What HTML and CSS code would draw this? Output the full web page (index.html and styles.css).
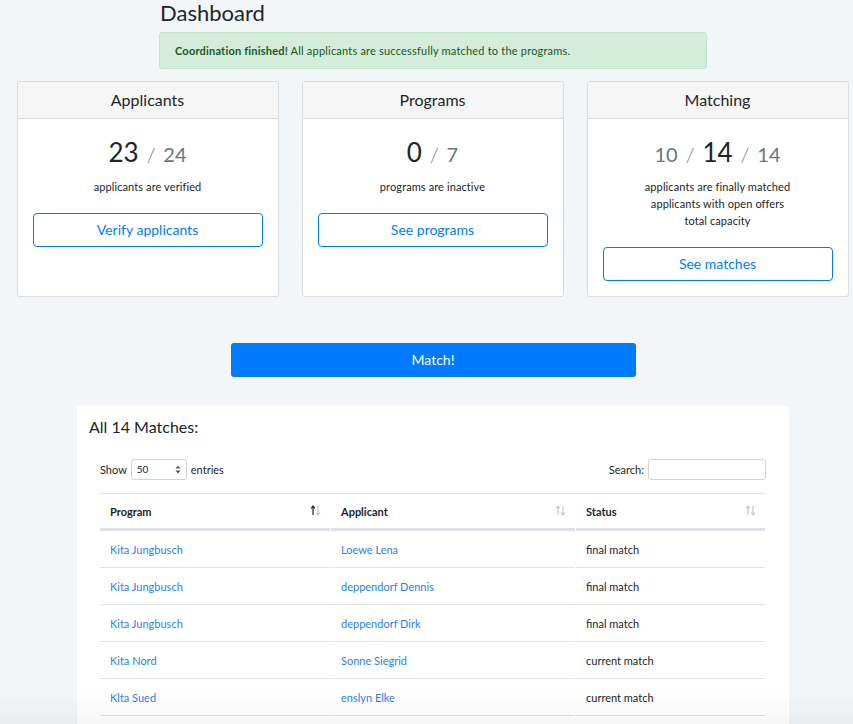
FILE: index.html
```html
<!DOCTYPE html>
<html>
<head>
<meta charset="utf-8">
<link rel="stylesheet" href="styles.css">
</head>
<body>
<div class="page">
  <div class="top">
    <h1 class="title">Dashboard</h1>
    <div class="alert"><strong>Coordination finished!</strong> All applicants are successfully matched to the programs.</div>
  </div>

  <div class="cards">
    <div class="card">
      <div class="card-head">Applicants</div>
      <div class="card-body">
        <div class="nums"><span class="big">23</span><span class="sep">/</span><span class="small">24</span></div>
        <div class="desc">applicants are verified</div>
        <a class="btn-outline">Verify applicants</a>
      </div>
    </div>
    <div class="card">
      <div class="card-head">Programs</div>
      <div class="card-body">
        <div class="nums"><span class="big">0</span><span class="sep">/</span><span class="small">7</span></div>
        <div class="desc">programs are inactive</div>
        <a class="btn-outline">See programs</a>
      </div>
    </div>
    <div class="card">
      <div class="card-head">Matching</div>
      <div class="card-body">
        <div class="nums"><span class="small">10</span><span class="sep">/</span><span class="big">14</span><span class="sep">/</span><span class="small">14</span></div>
        <div class="desc">applicants are finally matched<br>applicants with open offers<br>total capacity</div>
        <a class="btn-outline">See matches</a>
      </div>
    </div>
  </div>

  <a class="btn-match">Match!</a>

  <div class="matches">
    <h2 class="matches-title">All 14 Matches:</h2>
    <div class="controls">
      <label class="show">Show <span class="select">50<svg width="6" height="9" viewBox="0 0 6 9"><path d="M3 0.5 L5.5 3.5 H0.5 Z M3 8.5 L5.5 5.5 H0.5 Z" fill="#555"/></svg></span> entries</label>
      <label class="search">Search: <span class="input"></span></label>
    </div>
    <table class="tbl">
      <thead>
        <tr>
          <th class="c1"><div class="th">Program<svg class="sort" width="11" height="11" viewBox="0 0 11 11"><path d="M3 10 V1.5 M1 3.5 L3 1 L5 3.5" stroke="#222" stroke-width="1.2" fill="none"/><path d="M8 1 V9.5 M6 7.5 L8 10 L10 7.5" stroke="#c8c8c8" stroke-width="1.2" fill="none"/></svg></div></th>
          <th class="c2"><div class="th">Applicant<svg class="sort" width="11" height="11" viewBox="0 0 11 11"><path d="M3 10 V1.5 M1 3.5 L3 1 L5 3.5" stroke="#c8c8c8" stroke-width="1.2" fill="none"/><path d="M8 1 V9.5 M6 7.5 L8 10 L10 7.5" stroke="#c8c8c8" stroke-width="1.2" fill="none"/></svg></div></th>
          <th class="c3"><div class="th">Status<svg class="sort" width="11" height="11" viewBox="0 0 11 11"><path d="M3 10 V1.5 M1 3.5 L3 1 L5 3.5" stroke="#c8c8c8" stroke-width="1.2" fill="none"/><path d="M8 1 V9.5 M6 7.5 L8 10 L10 7.5" stroke="#c8c8c8" stroke-width="1.2" fill="none"/></svg></div></th>
        </tr>
      </thead>
      <tbody>
        <tr><td><a>Kita Jungbusch</a></td><td><a>Loewe Lena</a></td><td>final match</td></tr>
        <tr><td><a>Kita Jungbusch</a></td><td><a>deppendorf Dennis</a></td><td>final match</td></tr>
        <tr><td><a>Kita Jungbusch</a></td><td><a>deppendorf Dirk</a></td><td>final match</td></tr>
        <tr><td><a>Kita Nord</a></td><td><a>Sonne Siegrid</a></td><td>current match</td></tr>
        <tr><td><a>Klta Sued</a></td><td><a>enslyn Elke</a></td><td>current match</td></tr>
      </tbody>
    </table>
  </div>
</div>
<div class="fade"></div>
</body>
</html>
```

FILE: styles.css
```css
html, body {
  margin: 0;
  padding: 0;
  background: #f3f6f9;
  font-family: Lato, "Open Sans", sans-serif;
  color: #212529;
  overflow: hidden;
  height: 724px;
}

.page {
  padding-left: 13px;
  display: flex;
  flex-direction: column;
  align-items: center;
}

.top {
  width: 548px;
}

.title {
  margin: 0;
  padding-top: 0;
  height: 32px;
  font-size: 22px;
  font-weight: 400;
  line-height: 26px;
  padding-left: 1px;
}

.alert {
  box-sizing: border-box;
  height: 37px;
  background: #d4edda;
  border: 1px solid #c3e6cb;
  border-radius: 3px;
  color: #155724;
  font-size: 11px;
  line-height: 35px;
  padding-left: 15px;
  letter-spacing: 0.2px;
}
.alert strong { font-weight: 700; }

.cards {
  margin-top: 12px;
  width: 833px;
  display: flex;
  gap: 23px;
}

.card {
  box-sizing: border-box;
  width: 262px;
  height: 216px;
  background: #fff;
  border: 1px solid #dcdcdc;
  border-radius: 3px;
  display: flex;
  flex-direction: column;
}

.card-head {
  height: 36px;
  background: #f6f6f6;
  border-bottom: 1px solid #d8d8d8;
  text-align: center;
  font-size: 16px;
  line-height: 35px;
  border-radius: 3px 3px 0 0;
}

.card-body {
  padding: 17px 15px 0 15px;
  text-align: center;
}

.nums {
  height: 32px;
  line-height: 32px;
  display: flex;
  justify-content: center;
  align-items: baseline;
  gap: 8px;
}
.big { font-size: 26px; color: #212529; }
.small { font-size: 20px; color: #6c757d; }
.sep { font-size: 20px; color: #6c757d; font-weight: 300; }

.desc {
  margin-top: 10px;
  font-size: 11px;
  line-height: 17px;
  letter-spacing: 0.1px;
}

.btn-outline {
  display: block;
  margin-top: 18px;
  height: 34px;
  box-sizing: border-box;
  border: 1px solid #007bff;
  border-radius: 4px;
  color: #007bff;
  font-size: 14px;
  line-height: 32px;
  text-align: center;
}

.btn-match {
  display: block;
  margin-top: 46px;
  width: 405px;
  height: 34px;
  background: #007bff;
  color: #fff;
  border-radius: 3px;
  font-size: 14px;
  line-height: 34px;
  text-align: center;
}

.matches {
  margin-top: 29px;
  width: 712px;
  background: #fff;
  box-sizing: border-box;
  padding: 10px 23px 0 23px;
  height: 400px;
}

.matches-title {
  margin: 0 0 0 -11px;
  font-size: 16px;
  font-weight: 400;
  line-height: 22px;
}

.controls {
  margin-top: 20px;
  display: flex;
  justify-content: space-between;
  align-items: center;
  font-size: 11px;
  height: 22px;
}

.show, .search {
  display: flex;
  align-items: center;
  gap: 4px;
}

.select {
  box-sizing: border-box;
  width: 56px;
  height: 21px;
  border: 1px solid #ced4da;
  border-radius: 3px;
  font-size: 10px;
  padding: 0 5px;
  display: flex;
  align-items: center;
  justify-content: space-between;
}

.input {
  display: block;
  box-sizing: border-box;
  width: 118px;
  height: 21px;
  border: 1px solid #ced4da;
  border-radius: 3px;
}

.tbl {
  margin-top: 13px;
  width: 667px;
  border-collapse: separate;
  border-spacing: 1px 0;
  margin-left: -1px;
  font-size: 11px;
}

.tbl th {
  height: 34px;
  border-top: 1px solid #dee2e6;
  border-bottom: 2px solid #dee2e6;
  text-align: left;
  padding: 0 9px 0 10px;
  font-weight: 700;
}
.tbl th.c1 { width: 211px; }
.tbl th.c2 { width: 225px; }

.th {
  display: flex;
  justify-content: space-between;
  align-items: center;
}

.sort { margin-top: -2px; }

.tbl td {
  height: 36px;
  border-top: 1px solid #dee2e6;
  border-bottom: 0;
  padding: 0 9px 0 10px;
}
.tbl tbody tr:first-child td { box-shadow: inset 0 1px 0 #fff; }
.tbl tbody tr:last-child td { border-bottom: 1px solid #dee2e6; }

.tbl a { color: #2a7ff0; }

.fade {
  position: fixed;
  left: 0;
  right: 0;
  bottom: 0;
  height: 32px;
  background: linear-gradient(rgba(0,0,0,0), rgba(0,0,0,0.035));
  pointer-events: none;
}
```
